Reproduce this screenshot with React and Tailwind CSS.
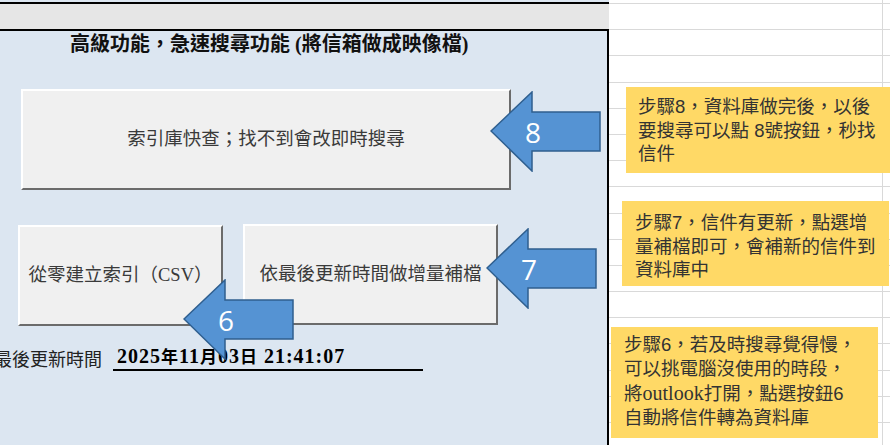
import React from "react";

const rows = Array.from({ length: 17 });

function Arrow({ className, n }) {
  return (
    <div className={`absolute w-[111px] h-[81px] ${className}`}>
      <svg width="111" height="81" viewBox="0 0 111 81" className="absolute inset-0">
        <polygon
          points="1,40 42,1 42,21 110,21 110,60 42,60 42,80"
          fill="#5593d3"
          stroke="#2f5f8f"
          strokeWidth="1.5"
        />
      </svg>
      <span className="absolute left-[28px] top-[24px] w-[30px] text-center text-[28px] leading-[34px] text-white font-['Open_Sans',sans-serif]">
        {n}
      </span>
    </div>
  );
}

function XlButton({ className, children }) {
  return (
    <div
      className={`flex items-center justify-center bg-[#f0f0f0] border-2 border-t-white border-l-white border-r-[#6b6b6b] border-b-[#6b6b6b] text-[#3a3a3a] text-[18.5px] font-['Liberation_Serif','Noto_Sans_CJK_TC',serif] whitespace-nowrap ${className}`}
    >
      {children}
    </div>
  );
}

export default function App() {
  return (
    <div className="relative w-[890px] h-[445px] overflow-hidden flex bg-white">
      {/* left form panel */}
      <div className="w-[609px] shrink-0 flex flex-col">
        <div className="h-[2px] bg-[#dce6f1]" />
        <div className="h-[2px] bg-black" />
        <div className="h-[25px] bg-[#e6e6e6]" />
        <div className="h-[2px] bg-black" />
        <div className="flex-1 bg-[#dce6f1] border-r-2 border-black">
          <div className="pt-[2px] pl-[70px] text-[20px] leading-[22px] font-bold text-[#111] whitespace-nowrap font-['Liberation_Serif','Noto_Sans_CJK_TC',serif]">
            高級功能，急速搜尋功能 (將信箱做成映像檔)
          </div>

          <XlButton className="mt-[34px] ml-[21px] w-[490px] h-[101px]">
            索引庫快查；找不到會改即時搜尋
          </XlButton>

          <div className="mt-[34px] flex items-start">
            <XlButton className="mt-px ml-[18px] w-[205px] h-[101px]">
              從零建立索引（CSV）
            </XlButton>
            <XlButton className="ml-[20px] w-[255px] h-[101px]">
              依最後更新時間做增量補檔
            </XlButton>
          </div>

          <div className="mt-[19px] flex items-end -ml-[6px] whitespace-nowrap font-['Liberation_Serif','Noto_Sans_CJK_TC',serif]">
            <span className="text-[18px] leading-[22px] text-[#222]">最後更新時間</span>
            <div className="ml-[11px] w-[310px] border-b-2 border-black pl-[4px] text-[20px] leading-[22px] font-bold tracking-[1px] text-black">
              2025<span className="text-[17px]">年</span>11<span className="text-[17px]">月</span>03
              <span className="text-[17px]">日</span> 21:41:07
            </div>
          </div>
        </div>
      </div>

      {/* sheet grid */}
      <div className="flex-1 flex">
        <div className="w-[274px] border-r border-[#d9d9d9]">
          <div className="h-[4px] border-b border-[#d9d9d9]" />
          {rows.map((_, i) => (
            <div key={i} className="h-[26.2px] border-b border-[#d9d9d9]" />
          ))}
        </div>
        <div className="flex-1">
          <div className="h-[4px] border-b border-[#d9d9d9]" />
          {rows.map((_, i) => (
            <div key={i} className="h-[26.2px] border-b border-[#d9d9d9]" />
          ))}
        </div>
      </div>

      {/* notes */}
      <div className="absolute left-[626px] top-[87px] w-[270px] h-[86px] bg-[#ffd966] pl-[12px] pt-[8px] text-[18.5px] leading-[23.5px] text-[#333] whitespace-nowrap font-['Liberation_Sans','Noto_Sans_CJK_TC',sans-serif]">
        步驟8，資料庫做完後，以後
        <br />
        要搜尋可以點 8號按鈕，秒找
        <br />
        信件
      </div>
      <div className="absolute left-[622px] top-[201px] w-[267px] h-[85px] bg-[#ffd966] pl-[13px] pt-[10px] text-[18.5px] leading-[23.5px] text-[#333] whitespace-nowrap font-['Liberation_Sans','Noto_Sans_CJK_TC',sans-serif]">
        步驟7，信件有更新，點選增
        <br />
        量補檔即可，會補新的信件到
        <br />
        資料庫中
      </div>
      <div className="absolute left-[611px] top-[327px] w-[267px] h-[111px] bg-[#ffd966] pl-[13px] pt-[6px] text-[18.5px] leading-[24px] text-[#333] whitespace-nowrap font-['Liberation_Sans','Noto_Sans_CJK_TC',sans-serif]">
        步驟6，若及時搜尋覺得慢，
        <br />
        可以挑電腦沒使用的時段，
        <br />
        將<span className="font-['Liberation_Serif',serif] text-[20px]">outlook</span>打開，點選按鈕6
        <br />
        自動將信件轉為資料庫
      </div>

      {/* arrows */}
      <Arrow className="left-[490px] top-[91px]" n="8" />
      <Arrow className="left-[486px] top-[228px]" n="7" />
      <Arrow className="left-[183px] top-[279px]" n="6" />
    </div>
  );
}
